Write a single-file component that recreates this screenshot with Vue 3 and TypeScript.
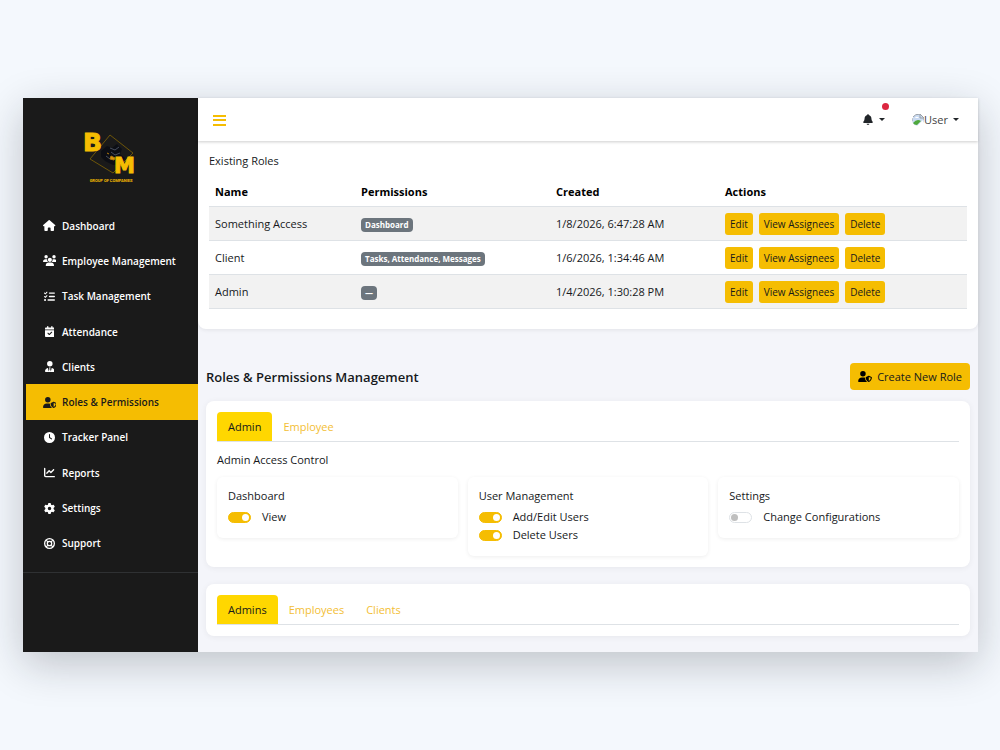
<script setup lang="ts">
import { ref } from 'vue'

interface NavItem {
  label: string
  box: string
  path: string
  active?: boolean
  outline?: boolean
}

interface Permission {
  id: string
  label: string
  enabled: boolean
}

const userShield =
  'M224 256A128 128 0 1 0 224 0a128 128 0 1 0 0 256zm-45.7 48C79.8 304 0 383.8 0 482.3C0 498.7 13.3 512 29.7 512H418.3c1.8 0 3.5-.2 5.3-.5c-76.3-55.1-99.8-141-103.1-200.2c-16.1-4.8-33.1-7.3-50.7-7.3H178.3zm308.8-78.3l-120 48C358 277.4 352 286.2 352 296c0 63.3 25.9 168.8 134.8 214.2c5.9 2.5 12.6 2.5 18.5 0C614.1 464.8 640 359.3 640 296c0-9.8-6-18.6-15.1-22.3l-120-48c-5.7-2.3-12.1-2.3-17.8 0zM591.4 312c-3.9 50.7-27.2 116.7-95.4 149.7V273.8L591.4 312z'

const navItems: NavItem[] = [
  {
    label: 'Dashboard',
    box: '0 0 576 512',
    path: 'M575.8 255.5c0 18-15 32.1-32 32.1h-32l.7 160.2c0 2.7-.2 5.4-.5 8.1V472c0 22.1-17.9 40-40 40H456c-1.1 0-2.2 0-3.3-.1c-1.4 .1-2.8 .1-4.2 .1H416 392c-22.1 0-40-17.9-40-40V448 384c0-17.7-14.3-32-32-32H256c-17.7 0-32 14.3-32 32v64 24c0 22.1-17.9 40-40 40H160 128.1c-1.5 0-3-.1-4.5-.2c-1.2 .1-2.4 .2-3.6 .2H104c-22.1 0-40-17.9-40-40V360c0-.9 0-1.9 .1-2.8V287.6H32c-18 0-32-14-32-32.1c0-9 3-17 10-24L266.4 8c7-7 15-8 22-8s15 2 21 7L564.8 231.5c8 7 12 15 11 24z',
  },
  {
    label: 'Employee Management',
    box: '0 0 640 512',
    path: 'M144 0a80 80 0 1 1 0 160A80 80 0 1 1 144 0zM512 0a80 80 0 1 1 0 160A80 80 0 1 1 512 0zM0 298.7C0 239.8 47.8 192 106.7 192h42.7c15.9 0 31 3.5 44.6 9.7c-1.3 7.2-1.9 14.7-1.9 22.3c0 38.2 16.8 72.5 43.3 96c-.2 0-.4 0-.7 0H21.3C9.6 320 0 310.4 0 298.7zM405.3 320c-.2 0-.4 0-.7 0c26.6-23.5 43.3-57.8 43.3-96c0-7.6-.7-15-1.9-22.3c13.6-6.3 28.7-9.7 44.6-9.7h42.7C592.2 192 640 239.8 640 298.7c0 11.8-9.6 21.3-21.3 21.3H405.3zM224 224a96 96 0 1 1 192 0 96 96 0 1 1 -192 0zM128 485.3C128 411.7 187.7 352 261.3 352H378.7C452.3 352 512 411.7 512 485.3c0 14.7-11.9 26.7-26.7 26.7H154.7c-14.7 0-26.7-11.9-26.7-26.7z',
  },
  {
    label: 'Task Management',
    box: '0 0 512 512',
    path: 'M152.1 38.2c9.9 8.9 10.7 24 1.8 33.9l-72 80c-4.4 4.9-10.6 7.8-17.2 7.9s-12.9-2.4-17.6-7L7 113C-2.3 103.6-2.3 88.4 7 79s24.6-9.4 33.9 0l22.1 22.1 55.1-61.2c8.9-9.9 24-10.7 33.9-1.8zm0 160c9.9 8.9 10.7 24 1.8 33.9l-72 80c-4.4 4.9-10.6 7.8-17.2 7.9s-12.9-2.4-17.6-7L7 273c-9.4-9.4-9.4-24.6 0-33.9s24.6-9.4 33.9 0l22.1 22.1 55.1-61.2c8.9-9.9 24-10.7 33.9-1.8zM224 96c0-17.7 14.3-32 32-32H480c17.7 0 32 14.3 32 32s-14.3 32-32 32H256c-17.7 0-32-14.3-32-32zm0 160c0-17.7 14.3-32 32-32H480c17.7 0 32 14.3 32 32s-14.3 32-32 32H256c-17.7 0-32-14.3-32-32zM160 416c0-17.7 14.3-32 32-32H480c17.7 0 32 14.3 32 32s-14.3 32-32 32H192c-17.7 0-32-14.3-32-32zM48 368a48 48 0 1 1 0 96 48 48 0 1 1 0-96z',
  },
  {
    label: 'Attendance',
    box: '0 0 448 512',
    path: 'M128 0c17.7 0 32 14.3 32 32V64H288V32c0-17.7 14.3-32 32-32s32 14.3 32 32V64h48c26.5 0 48 21.5 48 48v48H0V112C0 85.5 21.5 64 48 64H96V32c0-17.7 14.3-32 32-32zM0 192H448V464c0 26.5-21.5 48-48 48H48c-26.5 0-48-21.5-48-48V192zM329 305c9.4-9.4 9.4-24.6 0-33.9s-24.6-9.4-33.9 0l-95 95-47-47c-9.4-9.4-24.6-9.4-33.9 0s-9.4 24.6 0 33.9l64 64c9.4 9.4 24.6 9.4 33.9 0L329 305z',
  },
  {
    label: 'Clients',
    box: '0 0 448 512',
    path: 'M96 128a128 128 0 1 0 256 0A128 128 0 1 0 96 128zm94.5 200.2l18.6 31L175.8 483.1l-36-146.9c-2-8.1-9.8-13.4-17.9-11.3C51.9 342.4 0 405.8 0 481.3c0 17 13.8 30.7 30.7 30.7H417.3c17 0 30.7-13.8 30.7-30.7c0-75.5-51.9-138.9-121.9-156.4c-8.1-2-15.9 3.3-17.9 11.3l-36 146.9L238.9 359.2l18.6-31c6.4-10.7-1.3-24.2-13.7-24.2H204.3c-12.4 0-20.1 13.6-13.7 24.2z',
  },
  { label: 'Roles & Permissions', box: '0 0 640 512', path: userShield, active: true },
  {
    label: 'Tracker Panel',
    box: '0 0 512 512',
    path: 'M256 0a256 256 0 1 1 0 512A256 256 0 1 1 256 0zM232 120V256c0 8 4 15.5 10.7 20l96 64c11 7.4 25.9 4.4 33.3-6.7s4.4-25.9-6.7-33.3L280 243.2V120c0-13.3-10.7-24-24-24s-24 10.7-24 24z',
  },
  {
    label: 'Reports',
    box: '0 0 512 512',
    path: 'M64 64c0-17.7-14.3-32-32-32S0 46.3 0 64V400c0 44.2 35.8 80 80 80H480c17.7 0 32-14.3 32-32s-14.3-32-32-32H80c-8.8 0-16-7.2-16-16V64zm406.6 86.6c12.5-12.5 12.5-32.8 0-45.3s-32.8-12.5-45.3 0L320 210.7l-57.4-57.4c-12.5-12.5-32.8-12.5-45.3 0l-112 112c-12.5 12.5-12.5 32.8 0 45.3s32.8 12.5 45.3 0L240 221.3l57.4 57.4c12.5 12.5 32.8 12.5 45.3 0l128-128z',
  },
  {
    label: 'Settings',
    box: '0 0 512 512',
    path: 'M495.9 166.6c3.2 8.7 .5 18.4-6.4 24.6l-43.3 39.4c1.1 8.3 1.7 16.8 1.7 25.4s-.6 17.1-1.7 25.4l43.3 39.4c6.9 6.2 9.6 15.9 6.4 24.6c-4.4 11.9-9.7 23.3-15.8 34.3l-4.7 8.1c-6.6 11-14 21.4-22.1 31.2c-5.9 7.2-15.7 9.6-24.5 6.8l-55.7-17.7c-13.4 10.3-28.2 18.9-44 25.4l-12.5 57.1c-2 9.1-9 16.3-18.2 17.8c-13.8 2.3-28 3.5-42.5 3.5s-28.7-1.2-42.5-3.5c-9.2-1.5-16.2-8.7-18.2-17.8l-12.5-57.1c-15.8-6.5-30.6-15.1-44-25.4L83.1 425.9c-8.8 2.8-18.6 .3-24.5-6.8c-8.1-9.8-15.5-20.2-22.1-31.2l-4.7-8.1c-6.1-11-11.4-22.4-15.8-34.3c-3.2-8.7-.5-18.4 6.4-24.6l43.3-39.4C64.6 273.1 64 264.6 64 256s.6-17.1 1.7-25.4L22.4 191.2c-6.9-6.2-9.6-15.9-6.4-24.6c4.4-11.9 9.7-23.3 15.8-34.3l4.7-8.1c6.6-11 14-21.4 22.1-31.2c5.9-7.2 15.7-9.6 24.5-6.8l55.7 17.7c13.4-10.3 28.2-18.9 44-25.4l12.5-57.1c2-9.1 9-16.3 18.2-17.8C227.3 1.2 241.5 0 256 0s28.7 1.2 42.5 3.5c9.2 1.5 16.2 8.7 18.2 17.8l12.5 57.1c15.8 6.5 30.6 15.1 44 25.4l55.7-17.7c8.8-2.8 18.6-.3 24.5 6.8c8.1 9.8 15.5 20.2 22.1 31.2l4.7 8.1c6.1 11 11.4 22.4 15.8 34.3zM256 336a80 80 0 1 0 0-160 80 80 0 1 0 0 160z',
  },
  {
    label: 'Support',
    box: '0 0 512 512',
    path: 'M256 30a226 226 0 1 0 0 452a226 226 0 1 0 0-452zM256 154a102 102 0 1 0 0 204a102 102 0 1 0 0-204zM100 100L182 182M412 100L330 182M100 412L182 330M412 412L330 330',
    outline: true,
  },
]

const roles = [
  { name: 'Something Access', permissions: 'Dashboard', created: '1/8/2026, 6:47:28 AM' },
  { name: 'Client', permissions: 'Tasks, Attendance, Messages', created: '1/6/2026, 1:34:46 AM' },
  { name: 'Admin', permissions: '—', created: '1/4/2026, 1:30:28 PM' },
]

const accessTabs = ['Admin', 'Employee']
const accessTab = ref('Admin')
const peopleTabs = ['Admins', 'Employees', 'Clients']
const peopleTab = ref('Admins')

const groups = ref<{ title: string; items: Permission[] }[]>([
  { title: 'Dashboard', items: [{ id: 'view', label: 'View', enabled: true }] },
  {
    title: 'User Management',
    items: [
      { id: 'edit-users', label: 'Add/Edit Users', enabled: true },
      { id: 'delete-users', label: 'Delete Users', enabled: true },
    ],
  },
  { title: 'Settings', items: [{ id: 'config', label: 'Change Configurations', enabled: false }] },
])
</script>

<template>
  <div class="stage">
    <div class="window">
      <aside class="sidebar">
        <svg class="logo" viewBox="0 -8 56 62" role="img" aria-label="B M Group of Companies">
          <path d="M27 4L50 22L30 42L7 28Z" fill="none" stroke="#6d5509" stroke-width="1" />
          <path d="M18 20l6-5 5 2 5-4 5 5-2 5 5 4-5 6-7 1-8-4-4-4z" fill="#0c0e14" />
          <path d="M27 17l5 2 4-3M28 21l4 3 5-2M23 25l4 3" fill="none" stroke="#454c5c" stroke-width="1" />
          <path d="M28 25l4 2-1 2-4-1zM24 22l2 1" fill="#d9940a" stroke="#b57c0c" stroke-width="1" />
          <text class="logo-letter" x="0" y="20" font-size="25">B</text>
          <text class="logo-letter" x="31" y="42" font-size="21">M</text>
          <text class="logo-caption" x="28" y="51" text-anchor="middle">GROUP OF COMPANIES</text>
        </svg>
        <nav class="menu" aria-label="Main">
          <a
            v-for="item in navItems"
            :key="item.label"
            href="#"
            :class="['menu-link', { active: item.active }]"
          >
            <span class="menu-icon">
              <svg :viewBox="item.box" :class="{ outline: item.outline }" aria-hidden="true">
                <path :d="item.path" />
              </svg>
            </span>
            {{ item.label }}
          </a>
        </nav>
      </aside>

      <div class="content">
        <header class="topbar">
          <button class="plain" type="button" aria-label="Toggle menu">
            <svg class="burger" viewBox="0 0 13 12" aria-hidden="true">
              <path d="M0 2H13M0 6H13M0 11H13" />
            </svg>
          </button>
          <div class="topbar-right">
            <button class="plain bell" type="button" aria-label="Notifications">
              <svg class="bell-icon" viewBox="0 0 448 512" aria-hidden="true">
                <path
                  d="M224 0c-17.7 0-32 14.3-32 32V51.2C119 66 64 130.6 64 208v18.8c0 47-17.3 92.4-48.5 127.6l-7.4 8.3c-8.4 9.4-10.4 22.9-5.3 34.4S19.4 416 32 416H416c12.6 0 24-7.4 29.2-18.9s3.1-25-5.3-34.4l-7.4-8.3C401.3 319.2 384 273.9 384 226.8V208c0-77.4-55-142-128-156.8V32c0-17.7-14.3-32-32-32zm45.3 493.3c12-12 18.7-28.3 18.7-45.3H224 160c0 17 6.7 33.3 18.7 45.3s28.3 18.7 45.3 18.7s33.3-6.7 45.3-18.7z"
                />
              </svg>
              <span class="caret"></span>
              <span class="dot"></span>
            </button>
            <button class="plain user" type="button">
              <svg class="avatar" viewBox="0 0 12 12" aria-hidden="true">
                <path d="M2 2Q4 0 8 0L12 4V8L6 12Q0 11 0 6Z" fill="#c9daf2" />
                <path d="M1 9Q5 4 9 7L5 11Q2 11 1 9Z" fill="#4fa83c" />
                <path d="M3 4Q4 2 6 3L7 4H3Z" fill="#fff" />
                <path d="M11 6L5 12H12Z" fill="#fff" />
                <path d="M1 3Q3 0 8 0L12 4M8 0V4H12V6M0 7V4" fill="none" stroke="#9aa0a6" stroke-width="1" />
              </svg>
              <span>User</span>
              <span class="caret"></span>
            </button>
          </div>
        </header>

        <section class="existing">
          <h2 class="heading">Existing Roles</h2>
          <table class="roles">
            <colgroup>
              <col class="col-name" />
              <col class="col-permissions" />
              <col class="col-created" />
              <col />
            </colgroup>
            <thead>
              <tr>
                <th scope="col">Name</th>
                <th scope="col">Permissions</th>
                <th scope="col">Created</th>
                <th scope="col">Actions</th>
              </tr>
            </thead>
            <tbody>
              <tr v-for="role in roles" :key="role.name">
                <td>{{ role.name }}</td>
                <td><span class="badge">{{ role.permissions }}</span></td>
                <td>{{ role.created }}</td>
                <td>
                  <div class="actions">
                    <button class="small" type="button">Edit</button>
                    <button class="small" type="button">View Assignees</button>
                    <button class="small" type="button">Delete</button>
                  </div>
                </td>
              </tr>
            </tbody>
          </table>
        </section>

        <main class="manage">
          <div class="title-row">
            <h1 class="title">Roles &amp; Permissions Management</h1>
            <button class="create" type="button">
              <svg viewBox="0 0 640 512" aria-hidden="true"><path :d="userShield" /></svg>
              Create New Role
            </button>
          </div>

          <section class="card access">
            <div class="tabs" role="tablist">
              <button
                v-for="tab in accessTabs"
                :key="tab"
                type="button"
                role="tab"
                :aria-selected="accessTab === tab"
                :class="['tab', { selected: accessTab === tab }]"
                @click="accessTab = tab"
              >
                {{ tab }}
              </button>
            </div>
            <h2 class="heading">Admin Access Control</h2>
            <div class="groups">
              <section v-for="group in groups" :key="group.title" class="group">
                <h3 class="heading">{{ group.title }}</h3>
                <div v-for="item in group.items" :key="item.id" class="permission">
                  <input :id="item.id" v-model="item.enabled" class="switch" type="checkbox" role="switch" />
                  <label :for="item.id">{{ item.label }}</label>
                </div>
              </section>
            </div>
          </section>

          <section class="card">
            <div class="tabs" role="tablist">
              <button
                v-for="tab in peopleTabs"
                :key="tab"
                type="button"
                role="tab"
                :aria-selected="peopleTab === tab"
                :class="['tab', { selected: peopleTab === tab }]"
                @click="peopleTab = tab"
              >
                {{ tab }}
              </button>
            </div>
          </section>
        </main>
      </div>
    </div>
  </div>
</template>

<style>
body {
  margin: 0;
  background: #f4f8fd;
}
</style>

<style scoped>
.stage {
  box-sizing: border-box;
  min-height: 100vh;
  padding: 98px 22px 98px 23px;
  display: flex;
  font-family: 'Open Sans', 'Noto Sans', sans-serif;
  font-size: 11px;
  line-height: 16px;
  color: #16191c;
}

.stage *,
.stage *::before {
  box-sizing: border-box;
}

button {
  font: inherit;
  color: inherit;
  border: 0;
  cursor: pointer;
}

.window {
  flex: 1;
  display: flex;
  background: #f4f5fa;
  box-shadow: 0 12px 40px rgba(20, 25, 35, 0.24);
}

.sidebar {
  flex: none;
  width: 175px;
  background: #1a1a1a;
}

.logo {
  display: block;
  width: 56px;
  height: 62px;
  margin: 25px 0 23px 60px;
}

.logo-letter {
  font-family: 'DejaVu Sans', sans-serif;
  font-weight: 700;
  fill: #f5bd02;
  stroke: #f5bd02;
  stroke-width: 1px;
}

.logo-caption {
  font-family: Roboto, 'Liberation Sans', sans-serif;
  font-weight: 700;
  font-size: 4px;
  fill: #f5bd02;
}

.menu {
  display: grid;
  grid-template-rows: repeat(10, 1fr);
  height: 365px;
  padding: 0 0 11px 3px;
  border-bottom: 1px solid #2f3133;
}

.menu-link {
  display: flex;
  align-items: center;
  gap: 5px;
  padding-left: 16px;
  color: #fff;
  font-size: 10px;
  font-weight: 600;
  text-decoration: none;
  white-space: nowrap;
}

.menu-link.active {
  background: #f5bd02;
  color: #1a1a1a;
}

.menu-icon {
  display: flex;
  justify-content: center;
  width: 15px;
}

.menu-icon svg {
  height: 11px;
  fill: currentColor;
  fill-rule: evenodd;
}

.menu-icon svg.outline {
  fill: none;
  stroke: currentColor;
  stroke-width: 60;
}

.content {
  flex: 1;
  min-width: 0;
}

.topbar {
  position: relative;
  display: flex;
  align-items: center;
  justify-content: space-between;
  height: 43px;
  padding: 0 19px 0 15px;
  background: #fff;
  box-shadow: 0 1px 3px rgba(0, 0, 0, 0.2);
}

.plain {
  display: flex;
  align-items: center;
  padding: 0;
  background: none;
}

.burger {
  width: 13px;
  height: 12px;
  fill: none;
  stroke: #f5bd02;
  stroke-width: 2;
}

.topbar-right {
  display: flex;
  align-items: center;
  gap: 27px;
}

.bell {
  position: relative;
  gap: 6px;
}

.bell-icon {
  width: 10px;
  height: 11px;
  fill: #212529;
}

.caret {
  border: 3px solid transparent;
  border-top-color: #212529;
  border-bottom: 0;
}

.dot {
  position: absolute;
  top: -11px;
  right: -4px;
  width: 7px;
  height: 7px;
  border-radius: 50%;
  background: #dc2640;
}

.user {
  color: #444;
}

.avatar {
  width: 12px;
  height: 12px;
}

.user .caret {
  margin-left: 5px;
}

.existing {
  padding: 12px 11px 20px;
  background: #fff;
  border-radius: 0 0 8px 8px;
  box-shadow: 0 1px 4px rgba(0, 0, 0, 0.08);
}

.heading {
  margin: 0;
  font-size: 11px;
  line-height: 16px;
  font-weight: 500;
}

.roles {
  width: 100%;
  margin-top: 8px;
  table-layout: fixed;
  border-collapse: separate;
  border-spacing: 0;
}

.col-name {
  width: 146px;
}

.col-permissions {
  width: 195px;
}

.col-created {
  width: 169px;
}

.roles th,
.roles td {
  height: 34px;
  padding: 5px 6px;
  border-bottom: 1px solid #dee2e6;
  text-align: left;
  white-space: nowrap;
}

.roles th {
  height: 30px;
  color: #000;
  font-weight: 700;
}

.roles tbody tr:nth-child(odd) {
  background: #f2f2f2;
}

.badge {
  display: inline-block;
  padding: 0 4px;
  border-radius: 4px;
  background: #6c757d;
  color: #fff;
  font-size: 8px;
  line-height: 14px;
  font-weight: 700;
}

.actions {
  display: flex;
  gap: 6px;
}

.small {
  height: 22px;
  padding: 0 5px;
  border-radius: 3px;
  background: #f5bd02;
  font-size: 10px;
  line-height: 14px;
}

.manage {
  padding: 34px 8px 16px;
}

.title-row {
  display: flex;
  align-items: center;
  justify-content: space-between;
  margin-bottom: 11px;
}

.title {
  margin: 0;
  font-size: 13px;
  line-height: 20px;
  font-weight: 600;
}

.create {
  display: flex;
  align-items: center;
  gap: 5px;
  height: 27px;
  padding: 0 8px;
  border-radius: 4px;
  background: #f5bd02;
}

.create svg {
  width: 14px;
  height: 11px;
}

.card {
  padding: 11px;
  border-radius: 8px;
  background: #fff;
  box-shadow: 0 1px 6px rgba(0, 0, 0, 0.06);
}

.access {
  margin-bottom: 17px;
}

.tabs {
  display: flex;
  border-bottom: 1px solid #dee2e6;
}

.tab {
  height: 29px;
  padding: 0 11px;
  border-radius: 4px 4px 0 0;
  background: none;
  color: #f3be35;
}

.tab.selected {
  background: #ffd700;
  color: #16191c;
}

.access > .heading {
  margin: 10px 0 9px;
}

.groups {
  display: grid;
  grid-template-columns: repeat(3, 1fr);
  align-items: start;
  gap: 10px;
}

.group {
  padding: 11px 11px 12px;
  border-radius: 6px;
  box-shadow: 0 1px 4px rgba(0, 0, 0, 0.07);
}

.group .heading {
  margin-bottom: 4px;
}

.permission {
  display: flex;
  align-items: center;
  gap: 11px;
  height: 18px;
  font-weight: 500;
}

.switch {
  appearance: none;
  display: flex;
  align-items: center;
  width: 23px;
  height: 11px;
  margin: 0;
  padding: 0 1px;
  border: 1px solid #dee2e6;
  border-radius: 6px;
  background: #fff;
}

.switch::before {
  content: '';
  width: 7px;
  height: 7px;
  border-radius: 50%;
  background: #bfbfbf;
}

.switch:checked {
  justify-content: flex-end;
  border-color: #f5bd02;
  background: #f5bd02;
}

.switch:checked::before {
  background: #fff;
}
</style>
